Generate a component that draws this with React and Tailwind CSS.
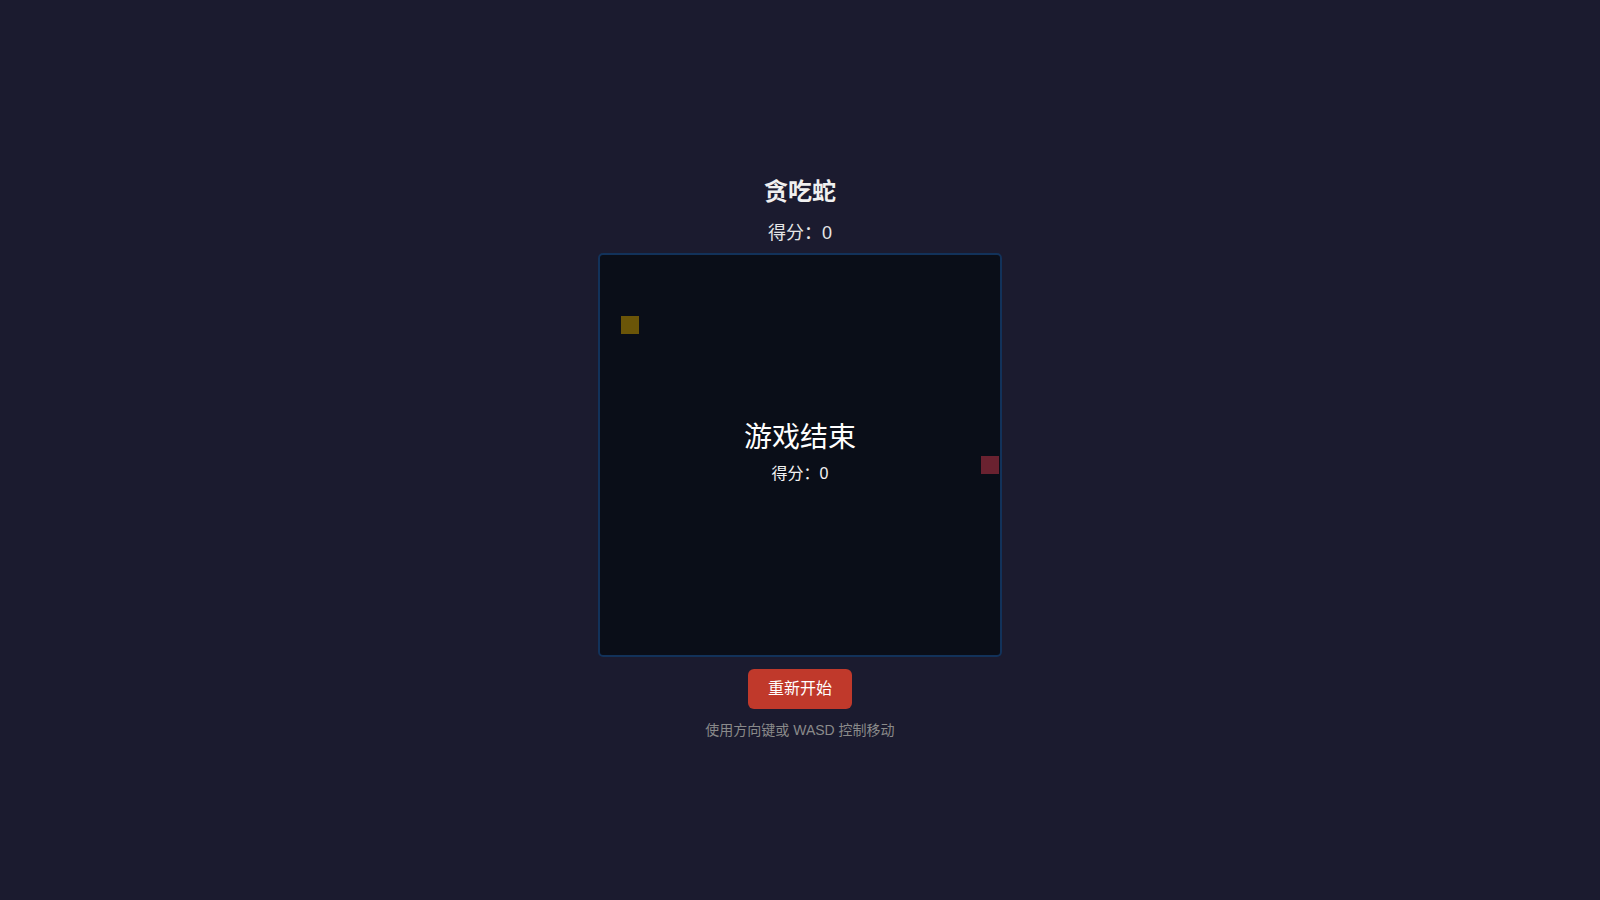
export default function App() {
  const font = { fontFamily: '"Liberation Sans", "Noto Sans CJK SC", sans-serif' };
  return (
    <div
      className="min-h-screen w-full bg-[#1b1b2f] flex flex-col items-center pt-[176px] text-[#eeeeee]"
      style={font}
    >
      <h1 className="text-2xl font-bold leading-8 text-[#f0f0f0]">贪吃蛇</h1>
      <div className="mt-[11px] text-lg leading-7 text-[#e6e6e6]">得分：0</div>
      <div className="mt-[6px] relative w-[404px] h-[404px] border-2 border-[#12325a] rounded-[5px] bg-[#0a0e18] overflow-hidden">
        <div className="absolute left-[21px] top-[61px] w-[18px] h-[18px] bg-[#6b5508]" />
        <div className="absolute left-[381px] top-[201px] w-[18px] h-[18px] bg-[#6a2230]" />
        <div className="absolute inset-0 pb-[5px] flex flex-col items-center justify-center">
          <div className="text-[28px] leading-9 text-white">游戏结束</div>
          <div className="mt-[6px] text-base leading-6 text-[#f2f2f2]">得分：0</div>
        </div>
      </div>
      <button className="mt-[12px] px-5 h-[40px] rounded-md bg-[#c0392b] text-white text-base leading-6">
        重新开始
      </button>
      <div className="mt-[11px] text-sm leading-5 text-[#8a8a8a]">使用方向键或 WASD 控制移动</div>
    </div>
  );
}
